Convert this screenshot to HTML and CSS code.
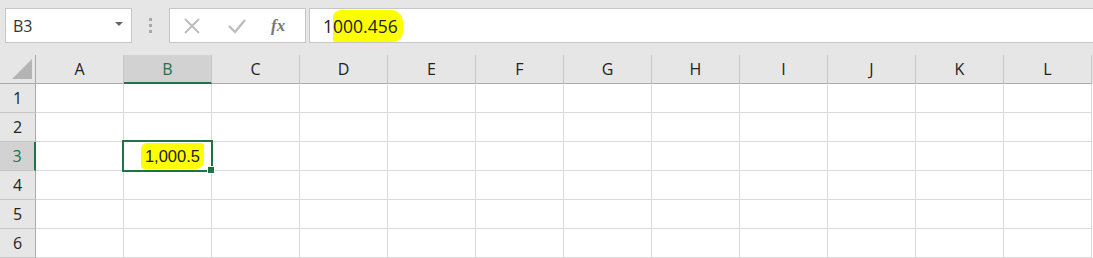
FILE: index.html
```html
<!DOCTYPE html>
<html lang="en">
<head>
    <meta charset="UTF-8">
    <title>Sheet</title>
    <link rel="stylesheet" href="styles.css">
</head>
<body>
    <div class="toolbar">
        <div class="name-box">
            <span>B3</span>
            <span class="caret"></span>
        </div>
        <div class="grip"><i></i><i></i><i></i></div>
        <div class="fx-buttons">
            <svg width="18" height="18" viewBox="0 0 18 18"><path d="M2 2 L16 16 M16 2 L2 16" stroke="#bdbdbd" stroke-width="2" fill="none"/></svg>
            <svg width="20" height="18" viewBox="0 0 20 18"><path d="M2 9 L8 15 L18 3" stroke="#bdbdbd" stroke-width="2.4" fill="none"/></svg>
            <span class="fx">fx</span>
        </div>
        <div class="formula">1<span class="mark">000.456</span></div>
    </div>

    <div class="sheet header">
        <div class="hd corner"><span class="tri"></span></div>
        <div class="hd col">A</div>
        <div class="hd col active">B</div>
        <div class="hd col">C</div>
        <div class="hd col">D</div>
        <div class="hd col">E</div>
        <div class="hd col">F</div>
        <div class="hd col">G</div>
        <div class="hd col">H</div>
        <div class="hd col">I</div>
        <div class="hd col">J</div>
        <div class="hd col">K</div>
        <div class="hd col">L</div>
    </div>
    <div class="sheet" id="rows"></div>

    <script>
        const rows = document.getElementById('rows');
        for (let r = 1; r <= 6; r++) {
            const head = document.createElement('div');
            head.className = 'hd row' + (r === 3 ? ' active' : '');
            head.textContent = r;
            rows.appendChild(head);
            for (let c = 0; c < 12; c++) {
                const cell = document.createElement('div');
                cell.className = 'cell';
                if (r === 3 && c === 1) {
                    cell.className = 'cell selected';
                    cell.innerHTML = '<span class="mark">1,000.5</span><span class="handle"></span>';
                }
                rows.appendChild(cell);
            }
        }
    </script>
</body>
</html>
```

FILE: styles.css
```css
body {
    margin: 0;
    background-color: #e6e6e6;
    font-family: "Open Sans", sans-serif;
    overflow: hidden;
}

.toolbar {
    display: flex;
    align-items: flex-start;
    height: 47px;
    padding: 8px 0 0 5px;
}

.name-box {
    box-sizing: border-box;
    width: 127px;
    height: 35px;
    background-color: #fff;
    border: 1px solid #c6c6c6;
    display: flex;
    align-items: center;
    justify-content: space-between;
    padding: 0 8px 0 7px;
    font-size: 16px;
    color: #333;
}

.caret {
    width: 0;
    height: 0;
    border-left: 4px solid transparent;
    border-right: 4px solid transparent;
    border-top: 4px solid #666;
    margin-top: -3px;
}

.grip {
    width: 37px;
    height: 35px;
    display: flex;
    flex-direction: column;
    align-items: center;
    justify-content: center;
    gap: 3px;
}

.grip i {
    display: block;
    width: 3px;
    height: 3px;
    background-color: #a9a9a9;
}

.fx-buttons {
    box-sizing: border-box;
    width: 137px;
    height: 35px;
    background-color: #fff;
    border: 1px solid #c6c6c6;
    display: flex;
    align-items: center;
    padding-left: 13px;
    gap: 26px;
}

.fx {
    font-family: "Liberation Serif", serif;
    font-style: italic;
    font-weight: bold;
    font-size: 17px;
    color: #777;
    margin-left: -2px;
}

.formula {
    box-sizing: border-box;
    flex: 1;
    height: 35px;
    margin-left: 3px;
    margin-right: -4px;
    background-color: #fff;
    border: 1px solid #c6c6c6;
    padding-left: 13px;
    display: flex;
    align-items: center;
    font-size: 17.5px;
    color: #222;
}

.formula .mark {
    padding: 4px 5px 4px 0;
    border-radius: 8px 12px 10px 2px;
}

.mark {
    background-color: #ffff00;
}

.sheet {
    display: grid;
    grid-template-columns: 36px repeat(12, 88px);
    grid-auto-rows: 29px;
    background-color: #fff;
}

.sheet.header {
    background-color: #e6e6e6;
}

.hd {
    box-sizing: border-box;
    background-color: #e6e6e6;
    display: flex;
    align-items: center;
    justify-content: center;
    font-size: 16px;
    color: #222;
}

.col {
    border-right: 1px solid #c6c6c6;
    border-bottom: 1px solid #ababab;
}

.corner {
    border-right: 1px solid #ababab;
    border-bottom: 1px solid #ababab;
    position: relative;
}

.tri {
    position: absolute;
    right: 3px;
    bottom: 4px;
    width: 0;
    height: 0;
    border-left: 20px solid transparent;
    border-bottom: 20px solid #b4b4b4;
}

.col.active {
    background-color: #d2d2d2;
    border-bottom: 2px solid #217346;
    color: #217346;
}

.row {
    border-right: 1px solid #ababab;
    border-bottom: 1px solid #c6c6c6;
}

.row.active {
    background-color: #d2d2d2;
    border-right: 2px solid #217346;
    color: #217346;
}

.cell {
    box-sizing: border-box;
    border-right: 1px solid #dadada;
    border-bottom: 1px solid #dadada;
}

.selected {
    position: relative;
    display: flex;
    align-items: center;
    justify-content: flex-end;
    padding-right: 7px;
    font-family: "Liberation Sans", sans-serif;
    font-size: 16.5px;
    color: #222;
}

.selected::after {
    content: "";
    position: absolute;
    left: -2px;
    top: -2px;
    right: -2px;
    bottom: -2px;
    border: 2px solid #217346;
}

.selected .mark {
    padding: 4px 4px 3px 4px;
    border-radius: 6px 2px 8px 4px;
}

.handle {
    position: absolute;
    right: -4px;
    bottom: -4px;
    width: 6px;
    height: 6px;
    background-color: #217346;
    border: 1px solid #fff;
    z-index: 1;
}
```
